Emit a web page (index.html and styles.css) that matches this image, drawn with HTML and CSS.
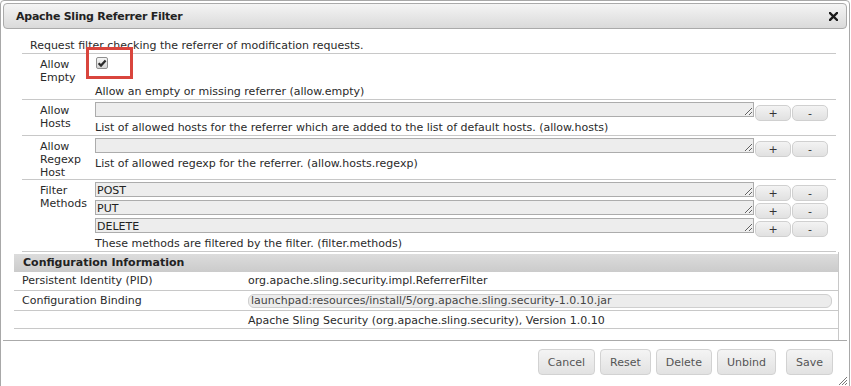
FILE: index.html
```html
<!DOCTYPE html>
<html>
<head>
    <title>Apache Sling Referrer Filter</title>
    <link rel="stylesheet" href="styles.css">
</head>
<body>
    <div class="dialog">
        <!-- 标题栏 -->
        <div class="titlebar">
            <span class="title">Apache Sling Referrer Filter</span>
            <span class="close">
                <svg width="9" height="9" viewBox="0 0 9 9"><path d="M1 1L8 8M8 1L1 8" stroke="#1a1a1a" stroke-width="2.4" stroke-linecap="square"/></svg>
            </span>
        </div>

        <div class="content">
            <div class="form">
                <div class="intro">Request filter checking the referrer of modification requests.</div>

                <div class="row">
                    <div class="label">Allow Empty</div>
                    <div class="value">
                        <div class="check-line">
                            <span class="checkbox">
                                <svg width="10" height="10" viewBox="0 0 10 10"><path d="M1.6 5.2L4 7.6L8.6 2.4" fill="none" stroke="#2b2b2b" stroke-width="2.2"/></svg>
                            </span>
                            <span class="highlight"></span>
                        </div>
                        <div class="desc">Allow an empty or missing referrer (allow.empty)</div>
                    </div>
                </div>

                <div class="row">
                    <div class="label">Allow Hosts</div>
                    <div class="value">
                        <div class="field">
                            <textarea rows="1"></textarea>
                            <button class="small">+</button><button class="small">-</button>
                        </div>
                        <div class="desc">List of allowed hosts for the referrer which are added to the list of default hosts. (allow.hosts)</div>
                    </div>
                </div>

                <div class="row">
                    <div class="label">Allow Regexp Host</div>
                    <div class="value">
                        <div class="field">
                            <textarea rows="1"></textarea>
                            <button class="small">+</button><button class="small">-</button>
                        </div>
                        <div class="desc">List of allowed regexp for the referrer. (allow.hosts.regexp)</div>
                    </div>
                </div>

                <div class="row">
                    <div class="label">Filter Methods</div>
                    <div class="value">
                        <div class="field">
                            <textarea rows="1">POST</textarea>
                            <button class="small">+</button><button class="small">-</button>
                        </div>
                        <div class="field">
                            <textarea rows="1">PUT</textarea>
                            <button class="small">+</button><button class="small">-</button>
                        </div>
                        <div class="field">
                            <textarea rows="1">DELETE</textarea>
                            <button class="small">+</button><button class="small">-</button>
                        </div>
                        <div class="desc">These methods are filtered by the filter. (filter.methods)</div>
                    </div>
                </div>
            </div>

            <!-- 配置信息 -->
            <div class="config">
                <div class="config-head">Configuration Information</div>
                <div class="config-row">
                    <div class="config-label">Persistent Identity (PID)</div>
                    <div class="config-value">org.apache.sling.security.impl.ReferrerFilter</div>
                </div>
                <div class="config-row">
                    <div class="config-label">Configuration Binding</div>
                    <div class="config-value"><span class="binding">launchpad:resources/install/5/org.apache.sling.security-1.0.10.jar</span></div>
                </div>
                <div class="config-row">
                    <div class="config-label"></div>
                    <div class="config-value">Apache Sling Security (org.apache.sling.security), Version 1.0.10</div>
                </div>
            </div>
        </div>

        <div class="buttonpane">
            <button class="action">Cancel</button>
            <button class="action">Reset</button>
            <button class="action">Delete</button>
            <button class="action">Unbind</button>
            <button class="action save">Save</button>
        </div>

        <svg class="resizer" width="10" height="10" viewBox="0 0 10 10"><path d="M9 1L1 9M9 4L4 9M9 7L7 9" stroke="#777" stroke-width="1"/></svg>
    </div>
</body>
</html>
```

FILE: styles.css
```css
body {
    margin: 0;
    background: #fff;
    font-family: "DejaVu Sans", Verdana, sans-serif;
    font-size: 11px;
    color: #2a2a2a;
    overflow: hidden;
}

.dialog {
    position: relative;
    width: 850px;
    height: 388px;
    box-sizing: border-box;
    border: 1px solid #a8a8a8;
    border-radius: 4px 4px 0 0;
    padding: 2px;
    background: #fff;
}

.titlebar {
    height: 26px;
    box-sizing: border-box;
    border: 1px solid #aaa;
    border-radius: 4px;
    background: linear-gradient(#f4f4f4, #dadada);
    display: flex;
    align-items: center;
    justify-content: space-between;
    padding: 0 8px 0 12px;
}

.title {
    font-weight: bold;
    font-size: 11px;
    color: #222;
    letter-spacing: -0.25px;
}

.close {
    display: flex;
    margin-top: 1px;
}

.content {
    padding: 0 8px 0 11px;
}

.form {
    margin: 0 3px 0 8px;
}

.intro {
    padding: 10px 8px 1px;
    line-height: 13px;
    border-bottom: 1px solid #c8c8c8;
}

.row {
    display: grid;
    grid-template-columns: 73px 1fr;
    border-bottom: 1px solid #c8c8c8;
}

.label {
    padding: 4px 0 0 18px;
    line-height: 13px;
}

.value {
    padding: 2px 0 0;
}

.desc {
    padding-top: 1px;
    line-height: 14px;
}

.check-line {
    position: relative;
    height: 28px;
    padding-top: 1px;
    box-sizing: border-box;
}

.checkbox {
    display: flex;
    align-items: center;
    justify-content: center;
    width: 12px;
    height: 12px;
    box-sizing: border-box;
    margin-left: 1px;
    border: 1px solid #8f8f8f;
    border-radius: 2px;
    background: linear-gradient(#f6f6f6, #d4d4d4);
}

.highlight {
    position: absolute;
    left: -9px;
    top: -9px;
    width: 47px;
    height: 32px;
    box-sizing: border-box;
    border: 3px solid #d9453d;
}

.field {
    display: flex;
    align-items: flex-start;
    height: 18px;
}

textarea {
    width: 659px;
    height: 15px;
    box-sizing: border-box;
    margin: 0;
    padding: 1px 1px 0;
    border: 1px solid #acacac;
    background: #ededed;
    font-family: "DejaVu Sans", Verdana, sans-serif;
    font-size: 11px;
    line-height: 13px;
    color: #222;
    overflow: hidden;
}

button {
    font-family: "DejaVu Sans", Verdana, sans-serif;
    font-size: 11px;
    cursor: pointer;
}

.small {
    width: 36px;
    height: 16px;
    margin: 3px 0 0 1px;
    padding: 0;
    border: 1px solid #d0d0d0;
    border-radius: 5px;
    background: linear-gradient(#f3f3f3, #e1e1e1);
    color: #333;
    line-height: 13px;
}

.config {
    padding: 2px 0 11px;
    border-right: 1px solid #c8c8c8;
}

.config-head {
    height: 18px;
    line-height: 18px;
    padding-left: 9px;
    font-weight: bold;
    color: #222;
    background: linear-gradient(#dcdcdc, #cbcbcb);
}

.config-row {
    display: grid;
    grid-template-columns: 234px 1fr;
    border-bottom: 1px solid #c8c8c8;
    padding: 2px 0 3px;
    line-height: 13px;
}

.config-row + .config-row {
    padding: 3px 0 2px;
}

.config-row:last-child {
    padding: 3px 0 1px;
}

.config-label {
    padding-left: 8px;
}

.config-value {
    padding-right: 6px;
}

.binding {
    display: block;
    height: 14px;
    box-sizing: border-box;
    line-height: 12px;
    padding-left: 2px;
    border: 1px solid #cfcfcf;
    border-radius: 6px;
    background: #ececec;
    color: #444;
}

.buttonpane {
    border-top: 1px solid #aaa;
    padding: 8px 14px 0 0;
    display: flex;
    justify-content: flex-end;
    gap: 5px;
}

.action {
    height: 26px;
    padding: 0 9px;
    border: 1px solid #d2d2d2;
    border-radius: 4px;
    background: linear-gradient(#f4f4f4, #e2e2e2);
    color: #555;
}

.save {
    margin-left: 5px;
}

.resizer {
    position: absolute;
    right: 1px;
    bottom: 1px;
}
```
